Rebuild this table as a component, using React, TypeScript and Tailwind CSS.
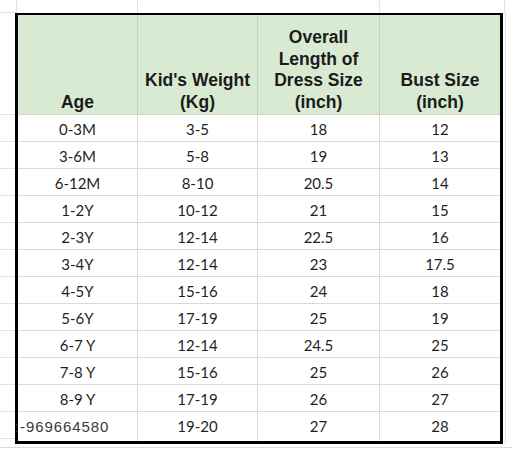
import React from 'react';

const rows = [
  ['0-3M', '3-5', '18', '12'],
  ['3-6M', '5-8', '19', '13'],
  ['6-12M', '8-10', '20.5', '14'],
  ['1-2Y', '10-12', '21', '15'],
  ['2-3Y', '12-14', '22.5', '16'],
  ['3-4Y', '12-14', '23', '17.5'],
  ['4-5Y', '15-16', '24', '18'],
  ['5-6Y', '17-19', '25', '19'],
  ['6-7 Y', '12-14', '24.5', '25'],
  ['7-8 Y', '15-16', '25', '26'],
  ['8-9 Y', '17-19', '26', '27'],
  ['', '19-20', '27', '28'],
];

const widths = ['w-[120px]', 'w-[120px]', 'w-[122px]', 'w-[120px]'];

const headers: React.ReactNode[] = [
  'Age',
  <>
    Kid's Weight
    <br />
    (Kg)
  </>,
  <>
    Overall
    <br />
    Length of
    <br />
    Dress Size
    <br />
    (inch)
  </>,
  <>
    Bust Size
    <br />
    (inch)
  </>,
];

const App = () => {
  return (
    <div className="w-[512px] h-[450px] bg-white overflow-hidden flex flex-col font-['Lato',sans-serif] text-[#1f1f1f]">
      {/* sheet grid above the table */}
      <div className="h-[13px] flex shrink-0">
        <div className="w-[17px] border-r border-b border-[#e4e4e4]" />
        <div className="w-[121px] border-r border-[#e4e4e4]" />
        <div className="w-[242px] border-r border-[#e4e4e4]" />
        <div className="w-[125px] border-r border-[#e4e4e4]" />
      </div>

      <div className="flex shrink-0">
        {/* left gutter row lines */}
        <div className="w-[15px] flex flex-col">
          <div className="h-[102px] border-b border-[#e4e4e4]" />
          {rows.map((_, i) => (
            <div key={i} className="h-[27px] border-b border-[#e4e4e4]" />
          ))}
        </div>

        {/* size table */}
        <div className="border-t-2 border-x-[3px] border-b-[3px] border-black flex flex-col">
          <div className="flex h-[100px] bg-[#d9ead3] border-b border-[#cfd6cc]">
            {headers.map((h, i) => (
              <div
                key={i}
                className={`${widths[i]} ${i < 3 ? 'border-r border-[#c3d3bd]' : ''} flex items-end justify-center pb-[1px] text-center font-['Liberation_Sans',Arial,sans-serif] font-bold text-[17.5px] leading-[21.5px] text-[#1b1b1b]`}
              >
                <span>{h}</span>
              </div>
            ))}
          </div>
          {rows.map((r, ri) => (
            <div
              key={ri}
              className={`flex ${ri === rows.length - 1 ? 'h-[29px]' : 'h-[27px] border-b border-[#dadada]'}`}
            >
              {r.map((c, ci) => (
                <div
                  key={ci}
                  className={`${widths[ci]} ${ci < 3 ? 'border-r border-[#dadada]' : ''} pt-[2px] text-center text-[15px] leading-[25px]`}
                >
                  {ri === rows.length - 1 && ci === 0 ? (
                    <span className="block text-left -ml-[3px] whitespace-nowrap font-['Liberation_Sans',Arial,sans-serif] text-[15px] tracking-[0.9px] text-[#3a3a3a]">
                      :-969664580
                    </span>
                  ) : (
                    c
                  )}
                </div>
              ))}
            </div>
          ))}
        </div>

        {/* right gutter */}
        <div className="w-[3px] border-r border-[#e4e4e4]" />
      </div>

      {/* sheet grid below */}
      <div className="mt-[3px] flex-1 border-t border-[#dcdcdc]" />
    </div>
  );
};

export default App;
